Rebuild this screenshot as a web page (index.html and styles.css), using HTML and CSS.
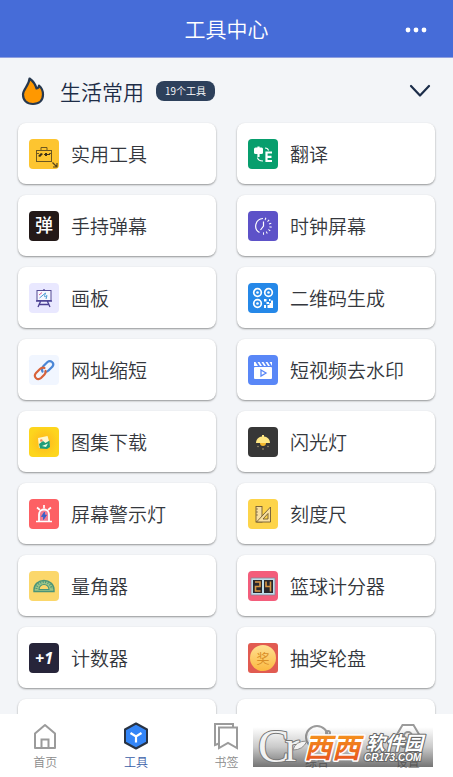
FILE: index.html
```html
<!DOCTYPE html>
<html lang="zh-CN">
<head>
<meta charset="utf-8">
<meta name="viewport" content="width=device-width, initial-scale=1">
<title>工具中心</title>
<link rel="stylesheet" href="styles.css">
</head>
<body>
<div class="app">
  <header class="topbar">
    <h1 class="topbar-title">工具中心</h1>
    <button class="more" type="button" aria-label="更多">
      <svg width="22" height="6" viewBox="0 0 22 6" fill="#fff"><circle cx="3" cy="3" r="2.4"/><circle cx="11" cy="3" r="2.4"/><circle cx="19" cy="3" r="2.4"/></svg>
    </button>
  </header>

  <main class="content">
    <div class="section-head">
      <svg class="flame" width="24" height="30" viewBox="0 0 24 30"><path d="M8.500 2.500C12 5 14.500 8.500 15.500 12.500C17.500 12 18 10.500 18 9.500C21 12 22 15 22 18.500C22 24.500 18 28 12 28C6 28 2 24.500 2 18.500C2 13 8 10 8.500 2.500Z" fill="#ff9800" stroke="#26384f" stroke-width="2.200" stroke-linejoin="round"/></svg>
      <h2 class="section-title">生活常用</h2>
      <span class="count">19个工具</span>
      <button class="fold" type="button" aria-label="收起">
        <svg width="22" height="14" viewBox="0 0 22 14" fill="none" stroke="#1c2d49" stroke-width="2.200" stroke-linecap="round" stroke-linejoin="round"><path d="M2 2L11 11.500L20 2"/></svg>
      </button>
    </div>

    <div class="grid">
      <button class="card" type="button">
        <svg class="icon" viewBox="0 0 30 30"><rect width="30" height="30" rx="4" fill="#fdc530"/><g fill="none" stroke="#6d5720" stroke-width="1"><rect x="7.500" y="11.500" width="15" height="11"/><path d="M12 11V8.500H18V11M7.500 14.500H10M20 14.500H22.500"/></g><path d="M9 17L12 14L14 15L11 18ZM16 14H18V17H16ZM15 15H21V16H15Z" fill="#3d3118"/><path d="M23.500 23.500L27.500 27.500M28 24V28H24" fill="none" stroke="#54431c" stroke-width="1.200"/></svg>
        <span>实用工具</span>
      </button>
      <button class="card" type="button">
        <svg class="icon" viewBox="0 0 30 30"><rect width="30" height="30" rx="4" fill="#079e6d"/><rect x="6" y="8.500" width="9" height="6.500" rx="1.500" fill="#fff"/><path d="M10.500 7.500V18" stroke="#fff" stroke-width="2.200"/><path d="M18 13.500H24M18 17.800H23.500M18 22H24M18.500 12.500V23" fill="none" stroke="#fff" stroke-width="2.200"/><path d="M17 9Q20 9 20.500 11.500M9.500 18.500Q10 22 15 22" fill="none" stroke="#fff" stroke-width="1.200"/></svg>
        <span>翻译</span>
      </button>
      <button class="card" type="button">
        <svg class="icon" viewBox="0 0 30 30"><rect width="30" height="30" rx="4" fill="#231918"/><text class="glyph" x="15" y="21" font-size="18" text-anchor="middle" fill="#fff">弹</text></svg>
        <span>手持弹幕</span>
      </button>
      <button class="card" type="button">
        <svg class="icon" viewBox="0 0 30 30"><rect width="30" height="30" rx="4" fill="#5d52c8"/><g fill="none" stroke="#fff" stroke-width="1.200"><path d="M15 7.500A7.500 7.500 0 0 0 11.500 21.500M15.500 10.500V15L12.500 19"/><path d="M15 22.500A7.500 7.500 0 0 0 15 7.500" stroke-width="2.400" stroke-dasharray="1 2.400"/></g></svg>
        <span>时钟屏幕</span>
      </button>
      <button class="card" type="button">
        <svg class="icon" viewBox="0 0 30 30"><rect width="30" height="30" rx="4" fill="#e9e8ff"/><g fill="none"><rect x="8" y="7.500" width="14" height="10" fill="#f7f7ff" stroke="#554b94"/><path d="M7 18H23M11.500 18.500L9 24M18.500 18.500L21 24M9.500 21.500H20.500M15 6V8" stroke="#4b4094" stroke-width="1.300"/><path d="M10.500 15L16.500 10Q14 16 18 12.500L17 16" stroke="#4d9bd4"/><path d="M10 12L13 9.500" stroke="#d9559a"/></g></svg>
        <span>画板</span>
      </button>
      <button class="card" type="button">
        <svg class="icon" viewBox="0 0 30 30"><rect width="30" height="30" rx="4" fill="#2588e8"/><g fill="none" stroke="#fff" stroke-width="1.700"><circle cx="9.500" cy="9.500" r="3.800"/><circle cx="20.500" cy="9.500" r="3.800"/><circle cx="9.500" cy="20.500" r="3.800"/></g><g fill="#fff"><circle cx="9.500" cy="9.500" r="1.300"/><circle cx="20.500" cy="9.500" r="1.300"/><circle cx="9.500" cy="20.500" r="1.300"/><path d="M16 16H18.500V18.500H16ZM21 16H22.500V18H21ZM23 17.500H25V25H19.500V22H21.500V20H23ZM18.500 19H21V21H18.500ZM16 22H18V25H16Z"/></g></svg>
        <span>二维码生成</span>
      </button>
      <button class="card" type="button">
        <svg class="icon" viewBox="0 0 30 30"><rect width="30" height="30" rx="4" fill="#f1f6ff"/><g fill="none" stroke-width="2.200" stroke-linecap="round"><path d="M13.500 16.500C12 14.500 13.500 12.500 14.500 11L18.500 7C21.500 4.500 26 8 23.500 11.500L19.500 15.500C18.500 16.500 17.500 17 16.500 17" stroke="#4a86d6"/><path d="M15.500 13C14 12.500 12 13 11 14L7 18C3.500 21.500 8.500 26 12 23L15.500 19.500C16.500 18.500 17 17.500 16.500 16" stroke="#d8623a"/></g></svg>
        <span>网址缩短</span>
      </button>
      <button class="card" type="button">
        <svg class="icon" viewBox="0 0 30 30"><rect width="30" height="30" rx="4" fill="#5987f7"/><rect x="6" y="12" width="18" height="12" rx="1" fill="#fff"/><path d="M6 7H7.500L10 11H6ZM9.500 7H11.500L14 11H12ZM13.500 7H15.500L18 11H16ZM17.500 7H19.500L22 11H20ZM21.500 7H24V11Z" fill="#fff"/><path d="M13 15L18 18L13 21Z" fill="none" stroke="#5987f7" stroke-width="1.300"/></svg>
        <span>短视频去水印</span>
      </button>
      <button class="card" type="button">
        <svg class="icon" viewBox="0 0 30 30"><defs><radialGradient id="sun"><stop offset="0" stop-color="#ffb51c"/><stop offset="1" stop-color="#fdd51d"/></radialGradient></defs><rect width="30" height="30" rx="4" fill="url(#sun)"/><path d="M9 11L18.500 9L20 14L21 19L10 21Z" fill="#fff7cf"/><path d="M10 17L14 14L16.500 16L20.500 13.500L21 20L18 22L11 21.500Z" fill="#1f9d78"/><path d="M13 19L19 16.500L17 20Z" fill="#e9ffe5"/><circle cx="12.300" cy="13.500" r="1.300" fill="#ee8560"/></svg>
        <span>图集下载</span>
      </button>
      <button class="card" type="button">
        <svg class="icon" viewBox="0 0 30 30"><rect width="30" height="30" rx="4" fill="#373737"/><path d="M14 8H16V9.500C20 10 22 13 22 16H8C8 13 10 10 14 9.500Z" fill="#ffe783"/><path d="M12 16H18Q18 19 15 19Q12 19 12 16Z" fill="#f4b82d"/><g fill="#b8a77b"><circle cx="10" cy="19.500" r=".7"/><circle cx="20" cy="19.500" r=".7"/><circle cx="15" cy="22" r=".8"/></g></svg>
        <span>闪光灯</span>
      </button>
      <button class="card" type="button">
        <svg class="icon" viewBox="0 0 30 30"><rect width="30" height="30" rx="4" fill="#fd6064"/><path d="M10 22V15.500A5 5 0 0 1 20 15.500V22" fill="#f27c92" stroke="#fff" stroke-width="1.800"/><path d="M7 22.500H23M15 6V9.500M8 8.500L11 11M22 8.500L19 11" stroke="#fff" stroke-width="1.700"/><path d="M15.500 13L12.500 17.500H14.500V20.500L17.500 16H15.500Z" fill="#3560c9" stroke="#3560c9" stroke-width=".8"/></svg>
        <span>屏幕警示灯</span>
      </button>
      <button class="card" type="button">
        <svg class="icon" viewBox="0 0 30 30"><rect width="30" height="30" rx="4" fill="#fdd44a"/><g fill="#f8dfa0" stroke="#725b34" stroke-width=".9"><rect x="8" y="7.500" width="6" height="15.500"/><path d="M8.500 23L22.500 8V23Z"/><path d="M15 20L20 14.500V20Z" fill="#fdd44a"/></g><path d="M8 10H10M8 13H10M8 16H10" stroke="#725b34" stroke-width=".7"/></svg>
        <span>刻度尺</span>
      </button>
      <button class="card" type="button">
        <svg class="icon" viewBox="0 0 30 30"><rect width="30" height="30" rx="4" fill="#fbd76b"/><g fill="none" stroke="#4a9479"><path d="M5 20.500V18.500A10 9 0 0 1 25 18.500V20.500Z" fill="#9cc588" stroke-width="1.400"/><path d="M10 18.500A5 5 0 0 1 20 18.500Z" fill="#fbd76b" stroke-width="1.100"/><path d="M7.500 18A7.500 7 0 0 1 22.500 18" stroke-width="2" stroke-dasharray="1 1.500"/></g></svg>
        <span>量角器</span>
      </button>
      <button class="card" type="button">
        <svg class="icon" viewBox="0 0 30 30"><rect width="30" height="30" rx="4" fill="#f35d7b"/><rect x="3" y="7" width="24" height="17" fill="#bdddea" stroke="#8b8496" stroke-width=".8"/><rect x="5" y="9" width="9" height="13" fill="#29272b"/><rect x="16" y="9" width="9" height="13" fill="#29272b"/><path d="M7 11H12V15.500H7.500V20H12.500M18 10.500V15.500H22.500M22.500 10.500V20.500" fill="none" stroke="#d79745" stroke-width="1.600"/></svg>
        <span>篮球计分器</span>
      </button>
      <button class="card" type="button">
        <svg class="icon" viewBox="0 0 30 30"><rect width="30" height="30" rx="4" fill="#27253a"/><text class="tally" x="15" y="21" font-size="16" text-anchor="middle" fill="#fff">+1</text></svg>
        <span>计数器</span>
      </button>
      <button class="card" type="button">
        <svg class="icon" viewBox="0 0 30 30"><defs><linearGradient id="coin" x1="0" y1="0" x2="0" y2="1"><stop offset="0" stop-color="#ffe092"/><stop offset="1" stop-color="#fbb940"/></linearGradient></defs><rect width="30" height="30" rx="3" fill="#e15b51"/><circle cx="15" cy="15" r="13" fill="url(#coin)"/><text class="prize" x="15" y="20" font-size="13" text-anchor="middle" fill="#d98e27">奖</text></svg>
        <span>抽奖轮盘</span>
      </button>
      <button class="card" type="button" aria-label="工具"></button>
      <button class="card" type="button" aria-label="工具">
        <svg class="icon" viewBox="0 0 30 30"><rect width="30" height="30" rx="4" fill="#b9bbbf"/></svg>
      </button>
    </div>
  </main>

  <nav class="tabs">
    <a class="tab" href="#home">
      <svg width="28" height="28" viewBox="0 0 28 28" fill="none" stroke="#9b9b9b" stroke-width="2"><path d="M4 11.500L14 3L24 11.500V26H4Z" stroke-linejoin="round"/><path d="M10.500 26V17.500H17.500V26"/></svg>
      <span>首页</span>
    </a>
    <a class="tab tab-active" href="#tools" aria-current="page">
      <svg width="28" height="28" viewBox="0 0 28 28"><path d="M14 1.500L25 7.500V20.500L14 26.500L3 20.500V7.500Z" fill="#3385f7" stroke="#293343" stroke-width="2" stroke-linejoin="round"/><path d="M8.500 11L14 14.500L19.500 11M14 14.500V20.500" fill="none" stroke="#fff" stroke-width="2.200"/></svg>
      <span>工具</span>
    </a>
    <a class="tab" href="#bookmarks">
      <svg width="28" height="28" viewBox="0 0 28 28" fill="none" stroke="#9b9b9b" stroke-width="2"><path d="M7 21.500L3 23V2H21V5.500"/><path d="M7 5.500H25V26L16 21L7 26Z"/></svg>
      <span>书签</span>
    </a>
    <a class="tab" href="#more">
      <svg width="28" height="28" viewBox="0 0 28 28" fill="none" stroke="#9b9b9b" stroke-width="2"><circle cx="14" cy="15" r="11"/><circle cx="25" cy="11" r="2"/></svg>
      <span>综合</span>
    </a>
    <a class="tab" href="#settings">
      <svg width="28" height="28" viewBox="0 0 28 28" fill="none" stroke="#9b9b9b" stroke-width="2"><path d="M8.500 3H19.500L26 14L19.500 25H8.500L2 14Z"/><circle cx="14" cy="14" r="4"/></svg>
      <span>设置</span>
    </a>
    <svg class="mark" width="180" height="40" viewBox="0 0 180 40">
      <defs>
        <linearGradient id="shade" x1="0" y1="0" x2="0" y2="1"><stop offset="0" stop-color="#333" stop-opacity="0"/><stop offset=".5" stop-color="#333" stop-opacity=".26"/><stop offset="1" stop-color="#333" stop-opacity=".68"/></linearGradient>
        <linearGradient id="ember" x1="0" y1="0" x2="0" y2="1"><stop offset="0" stop-color="#f9a51c"/><stop offset="1" stop-color="#e5491e"/></linearGradient>
      </defs>
      <rect width="180" height="40" fill="url(#shade)"/>
      <text class="mark-serif" x="5" y="35" font-size="47">C</text>
      <text class="mark-serif" x="32" y="34" font-size="44">r</text>
      <path d="M40 23Q42 14 54 14Q50 23 40 23Z" fill="#f2f2f2" stroke="#777" stroke-width=".8"/>
      <text class="mark-main" x="51" y="31" font-size="28">西西</text>
      <text class="mark-side" x="113" y="23" font-size="19">软件园</text>
      <text class="mark-latin" x="111" y="34" font-size="10">CR173.COM</text>
    </svg>
  </nav>
</div>
</body>
</html>
```
FILE: styles.css
```css
* {
  box-sizing: border-box;
}

body {
  margin: 0;
  background: #f3f5f8;
  color: #34373d;
  font-family: "Noto Sans CJK SC", sans-serif;
  font-weight: 350;
}

button {
  margin: 0;
  padding: 0;
  border: 0;
  background: none;
  color: inherit;
  font: inherit;
  cursor: pointer;
}

svg {
  display: block;
  flex: none;
}

.app {
  display: flex;
  flex-direction: column;
  height: 100vh;
  overflow: hidden;
}

.topbar {
  display: grid;
  grid-template-columns: 1fr auto 1fr;
  align-items: center;
  flex: none;
  height: 58px;
  padding: 0 26px 2px;
  border-bottom: 1px solid #8f9fdf;
  background: #466cd8;
  color: #fff;
}

.topbar-title {
  grid-column: 2;
  margin: 0;
  font-size: 21px;
  font-weight: 350;
  line-height: 32px;
}

.more {
  justify-self: end;
  padding: 12px 0 8px;
}

.content {
  flex: 1;
  min-height: 0;
  overflow: hidden;
  padding: 0 18px;
}

.section-head {
  display: flex;
  align-items: center;
  height: 65px;
  padding: 0 4px 0 3px;
  color: #1d2c47;
}

.section-title {
  margin: 0 12px 0 15px;
  font-size: 21px;
  font-weight: 350;
  line-height: 32px;
}

.count {
  padding: 0 9px;
  border-radius: 8px;
  background: #2d405b;
  color: #fff;
  font-size: 10px;
  line-height: 20px;
}

.fold {
  margin-left: auto;
}

.grid {
  display: grid;
  grid-template-columns: 1fr 1fr;
  grid-auto-rows: 61px;
  gap: 11px 21px;
}

.card {
  display: flex;
  align-items: center;
  gap: 12px;
  padding: 0 11px;
  border-radius: 8px;
  background: #fff;
  box-shadow: 0 1px 2px #0006;
  font-size: 19px;
  line-height: 28px;
  text-align: left;
  white-space: nowrap;
}

.icon {
  width: 30px;
  height: 30px;
}

.glyph {
  font-weight: 500;
}

.prize {
  font-weight: 400;
}

.tally {
  font-family: "Open Sans", sans-serif;
  font-style: italic;
  font-weight: 700;
}

.tabs {
  position: relative;
  display: grid;
  grid-template-columns: repeat(5, 1fr);
  flex: none;
  height: 63px;
  background: #fff;
}

.tab {
  display: flex;
  flex-direction: column;
  align-items: center;
  gap: 3px;
  padding-top: 8px;
  color: #8b8b8b;
  font-size: 12px;
  line-height: 18px;
  text-decoration: none;
}

.tab-active {
  color: #3a5ea8;
}

.mark {
  position: absolute;
  right: 20px;
  bottom: 10px;
  overflow: visible;
}

.mark text {
  paint-order: stroke;
  stroke-linejoin: round;
}

.mark-serif {
  fill: #f2f2f2;
  stroke: #777;
  stroke-width: 2px;
  font-family: "Liberation Serif", serif;
}

.mark-main {
  fill: url(#ember);
  stroke: #fff;
  stroke-width: 3px;
  font-style: italic;
  font-weight: 700;
}

.mark-side {
  fill: #fff;
  stroke: #666;
  stroke-width: 2px;
  font-style: italic;
  font-weight: 700;
}

.mark-latin {
  fill: #fff;
  stroke: #666;
  stroke-width: 2px;
  font-family: "Liberation Sans", sans-serif;
  font-style: italic;
  font-weight: 700;
}
```
